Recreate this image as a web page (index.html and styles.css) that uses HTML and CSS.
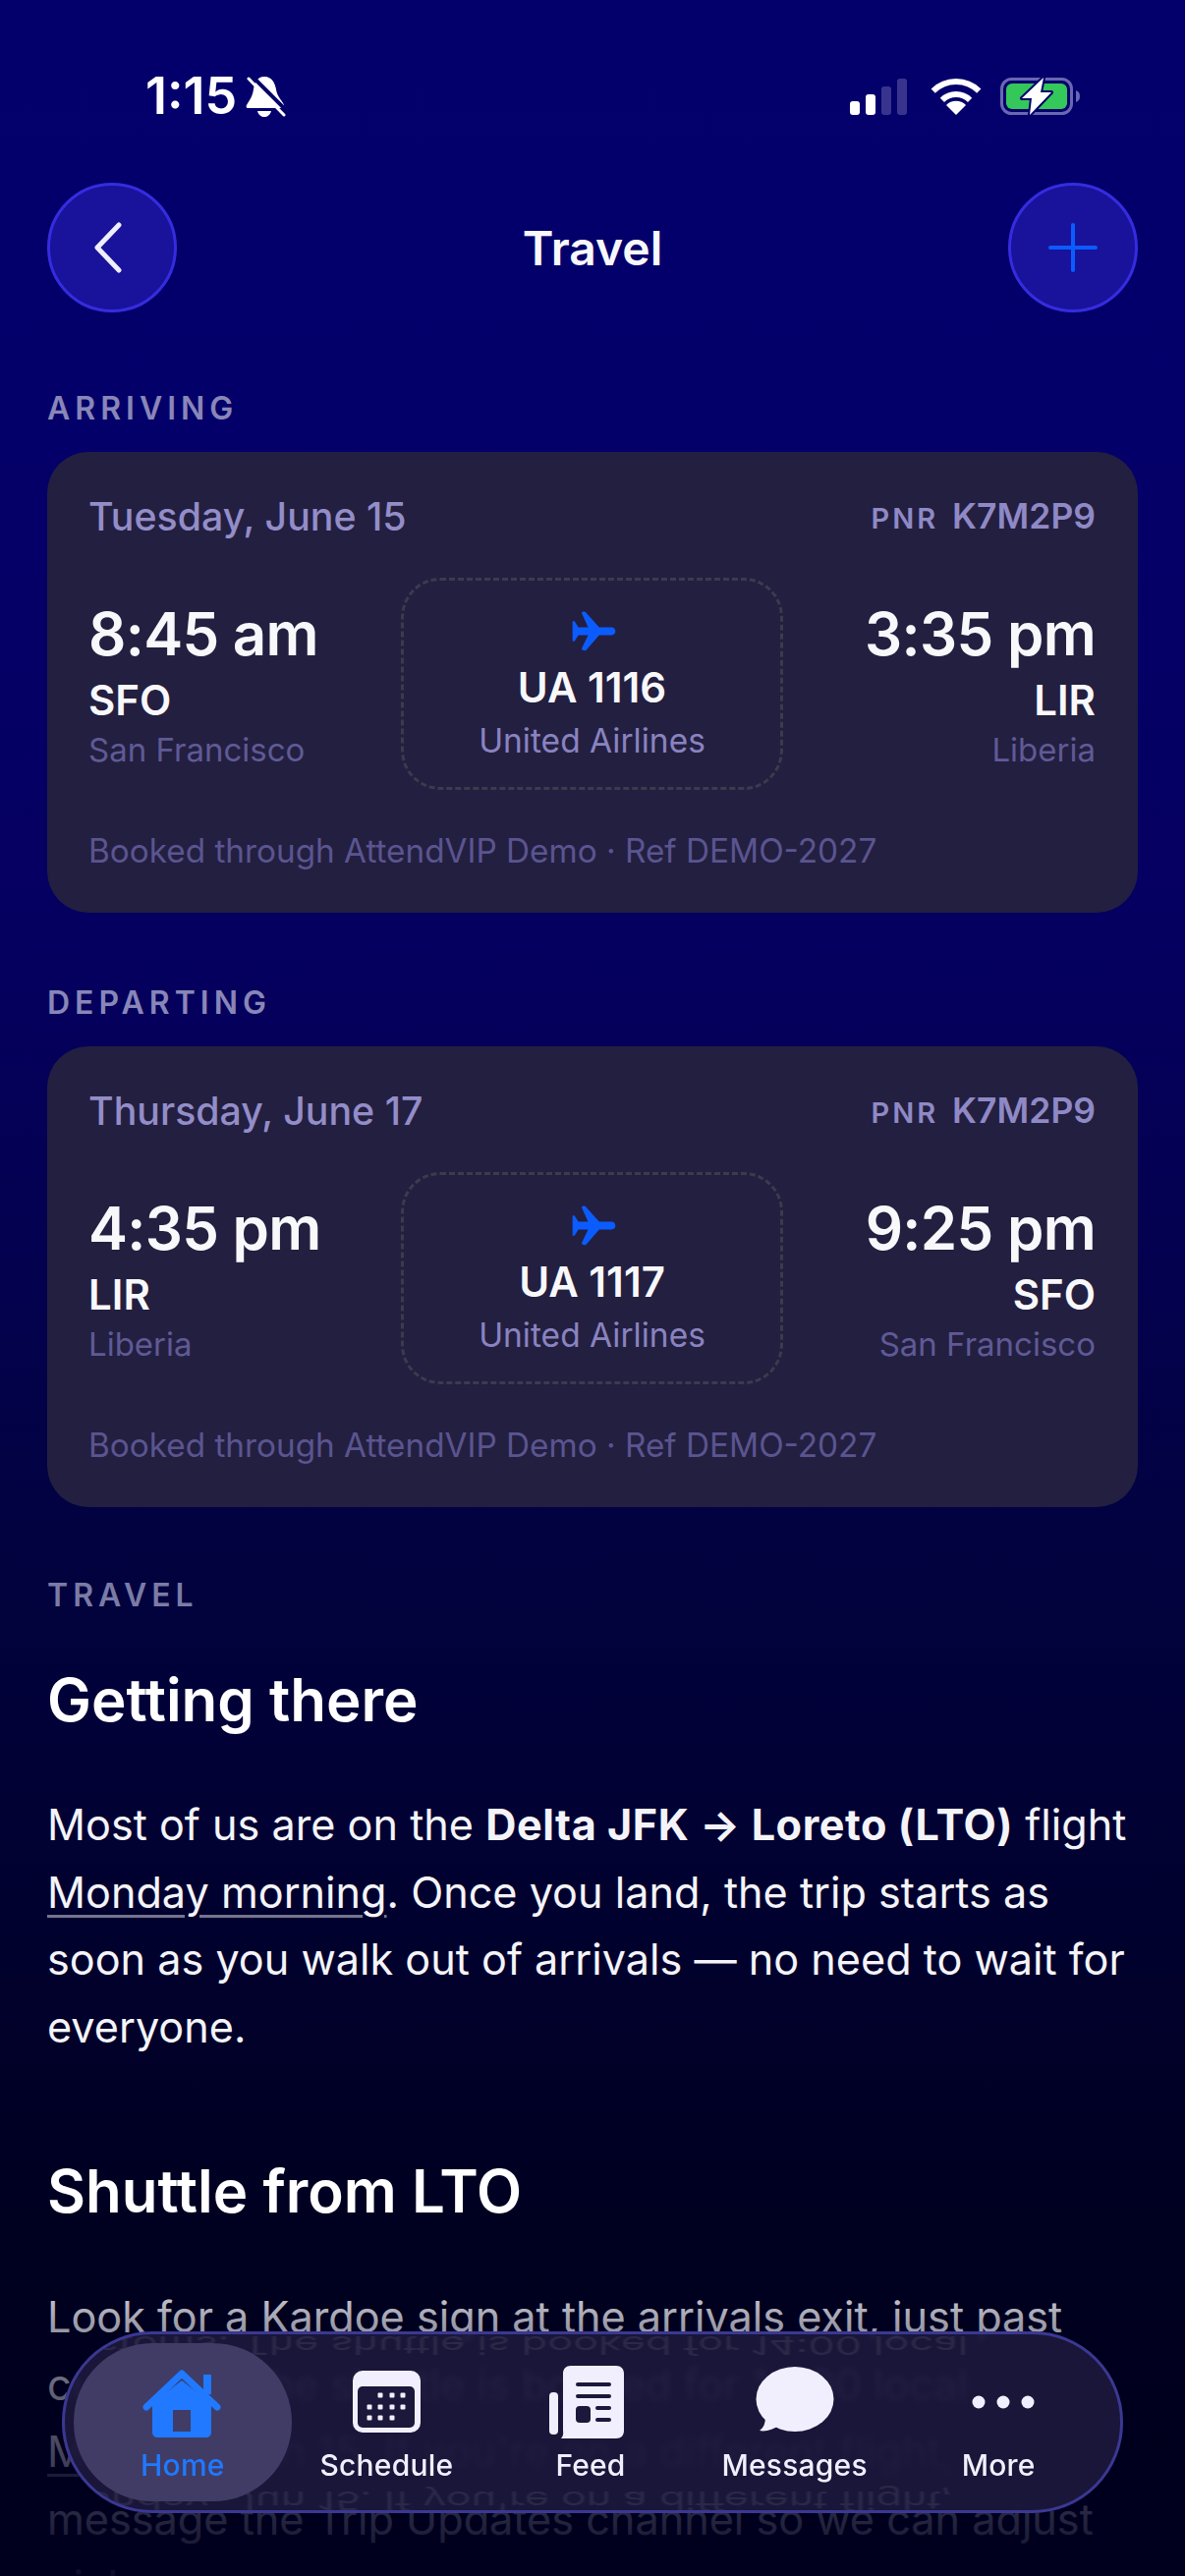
FILE: index.html
```html
<!DOCTYPE html>
<html lang="en">
<head>
    <meta charset="UTF-8">
    <meta name="viewport" content="width=device-width, initial-scale=1.0">
    <title>Travel</title>
    <link rel="stylesheet" href="styles.css">
</head>
<body>
<div class="page">
    <div class="status">
        <div class="status_left">
            <span class="clock">1:15</span>
            <svg width="42" height="43" viewBox="0 0 42 43">
                <path fill="#fff" d="M19 1C27 1 30 8 31 14C32 22 38 26 39 30C39 32 38 33 36 33H3C1 33 0 32 1 30C3 26 7 22 8 14C9 7 12 1 19 1Z"/>
                <path fill="#fff" d="M12 36H26C25 40 22 42 19 42C16 42 13 40 12 36Z"/>
                <path stroke="#03006a" stroke-width="4" d="M6 0L44 38"/>
                <path stroke="#fff" stroke-width="3" stroke-linecap="round" d="M3 3L39 40"/>
            </svg>
        </div>
        <div class="status_right">
            <svg class="signal" width="58" height="37" viewBox="0 0 58 37">
                <rect x="0" y="23" width="10" height="14" rx="3" fill="#fff"/>
                <rect x="16" y="16" width="10" height="21" rx="3" fill="#fff"/>
                <rect x="32" y="8" width="10" height="29" rx="3" fill="#38348e"/>
                <rect x="48" y="0" width="10" height="37" rx="3" fill="#38348e"/>
            </svg>
            <svg width="54" height="37" viewBox="0 0 54 37" fill="none" stroke="#fff" stroke-width="6">
                <path d="M3.7 12.7A33 33 0 0 1 50.3 12.7"/>
                <path d="M12.9 21.9A20 20 0 0 1 41.1 21.9"/>
                <path fill="#fff" stroke="none" d="M27 37L17 27A14 14 0 0 1 37 27Z"/>
            </svg>
            <svg width="82" height="40" viewBox="0 0 82 40">
                <rect x="1.5" y="2.5" width="71" height="35" rx="10" fill="none" stroke="#6a67b2" stroke-width="3"/>
                <rect x="6" y="7" width="62" height="26" rx="6" fill="#34c759"/>
                <path fill="#6a67b2" d="M77 14C80 15 81 17 81 20C81 23 80 25 77 26Z"/>
                <path fill="#fff" stroke="#03006a" stroke-width="4" stroke-linejoin="round" paint-order="stroke" d="M44 1L22 22H32L30 39L52 16H41Z"/>
            </svg>
        </div>
    </div>

    <div class="topbar">
        <div class="round_btn">
            <svg width="40" height="60" viewBox="0 0 40 60" fill="none" stroke="#eeeefc" stroke-width="5" stroke-linecap="round" stroke-linejoin="round"><path d="M27 7L5 30L27 53"/></svg>
        </div>
        <div class="topbar_title">Travel</div>
        <div class="round_btn">
            <svg width="50" height="50" viewBox="0 0 50 50" fill="none" stroke="#0b5cff" stroke-width="4" stroke-linecap="round"><path d="M25 2V48M2 25H48"/></svg>
        </div>
    </div>

    <div class="section_label first">ARRIVING</div>
    <div class="card">
        <div class="card_top">
            <span class="card_date">Tuesday, June 15</span>
            <span class="pnr"><span class="pnr_tag">PNR</span>K7M2P9</span>
        </div>
        <div class="route">
            <div class="stop">
                <div class="stop_time">8:45 am</div>
                <div class="stop_code">SFO</div>
                <div class="stop_city">San Francisco</div>
            </div>
            <div class="flight">
                <svg class="plane" width="45" height="41" viewBox="128 62 136 124"><path fill="#0b5cff" d="M250 112C258 112 262 118 262 124C262 130 258 136 250 136L212 136L172 182C168 185 160 184 158 178L178 136L148 136L136 155L130 155L130 93L136 93L148 112L178 112L158 68C160 63 168 62 172 67L212 112Z"/></svg>
                <div class="flight_no">UA 1116</div>
                <div class="flight_air">United Airlines</div>
            </div>
            <div class="stop stop_right">
                <div class="stop_time">3:35 pm</div>
                <div class="stop_code">LIR</div>
                <div class="stop_city">Liberia</div>
            </div>
        </div>
        <div class="card_foot">Booked through AttendVIP Demo · Ref DEMO-2027</div>
    </div>

    <div class="section_label">DEPARTING</div>
    <div class="card">
        <div class="card_top">
            <span class="card_date">Thursday, June 17</span>
            <span class="pnr"><span class="pnr_tag">PNR</span>K7M2P9</span>
        </div>
        <div class="route">
            <div class="stop">
                <div class="stop_time">4:35 pm</div>
                <div class="stop_code">LIR</div>
                <div class="stop_city">Liberia</div>
            </div>
            <div class="flight">
                <svg class="plane" width="45" height="41" viewBox="128 62 136 124"><path fill="#0b5cff" d="M250 112C258 112 262 118 262 124C262 130 258 136 250 136L212 136L172 182C168 185 160 184 158 178L178 136L148 136L136 155L130 155L130 93L136 93L148 112L178 112L158 68C160 63 168 62 172 67L212 112Z"/></svg>
                <div class="flight_no">UA 1117</div>
                <div class="flight_air">United Airlines</div>
            </div>
            <div class="stop stop_right">
                <div class="stop_time">9:25 pm</div>
                <div class="stop_code">SFO</div>
                <div class="stop_city">San Francisco</div>
            </div>
        </div>
        <div class="card_foot">Booked through AttendVIP Demo · Ref DEMO-2027</div>
    </div>

    <div class="section_label dim">TRAVEL</div>
    <h2 class="heading_one">Getting there</h2>
    <p class="copy copy_one">Most of us are on the <b>Delta JFK → Loreto (LTO)</b> flight <span class="link">Monday morning</span>. Once you land, the trip starts as soon as you walk out of arrivals — no need to wait for everyone.</p>
    <h2 class="heading_two">Shuttle from LTO</h2>
    <p class="copy copy_two">Look for a Kardoe sign at the arrivals exit, just past customs. The shuttle is booked for 14:00 local<br><span class="link">Monday, Jun 15</span>. If you're on a different flight,<br>message the Trip Updates channel so we can adjust pickup.</p>

    <div class="fade"></div>

    <div class="tabbar">
        <div class="ghost ghost_top">customs. The shuttle is booked for 14:00 local</div>
        <div class="ghost ghost_bottom">Monday, Jun 15. If you're on a different flight,</div>
        <div class="tabs">
            <div class="tab tab_active">
                <svg width="84" height="76" viewBox="0 0 84 76">
                    <path fill="#2079ff" d="M63 10H71V30H63Z"/>
                    <path fill="none" stroke="#2079ff" stroke-width="7" stroke-linecap="round" stroke-linejoin="round" d="M5 43L41 9L77 43"/>
                    <path fill="#2079ff" fill-rule="evenodd" d="M41 16L71 39V68C71 72 69 74 65 74H17C13 74 11 72 11 68V39ZM32 46V68H50V46Z"/>
                </svg>
                <span>Home</span>
            </div>
            <div class="tab">
                <svg width="84" height="76" viewBox="0 0 84 76">
                    <rect x="8" y="6" width="69" height="63" rx="10" fill="#f1effd"/>
                    <rect x="13" y="22" width="58" height="42" rx="5" fill="#1b183c"/>
                    <g fill="#f1effd">
                        <rect x="33.5" y="28.5" width="5" height="5" rx="1"/><rect x="45.5" y="28.5" width="5" height="5" rx="1"/><rect x="56.5" y="28.5" width="5" height="5" rx="1"/>
                        <rect x="22.5" y="40.5" width="5" height="5" rx="1"/><rect x="33.5" y="40.5" width="5" height="5" rx="1"/><rect x="45.5" y="40.5" width="5" height="5" rx="1"/><rect x="56.5" y="40.5" width="5" height="5" rx="1"/>
                        <rect x="22.5" y="51.5" width="5" height="5" rx="1"/><rect x="33.5" y="51.5" width="5" height="5" rx="1"/><rect x="45.5" y="51.5" width="5" height="5" rx="1"/>
                    </g>
                </svg>
                <span>Schedule</span>
            </div>
            <div class="tab">
                <svg width="84" height="76" viewBox="0 0 84 76">
                    <rect x="0" y="28" width="9" height="43" rx="4" fill="#f1effd"/>
                    <path fill="#f1effd" d="M22 1H68C73 1 76 4 76 9V67C76 72 73 75 68 75H12C15 72 14 69 14 66V9C14 4 17 1 22 1Z"/>
                    <g fill="#1b183c">
                        <rect x="27" y="18" width="36" height="4" rx="2"/>
                        <rect x="27" y="30" width="36" height="4" rx="2"/>
                        <rect x="27" y="42" width="15" height="17" rx="4"/>
                        <rect x="47" y="42" width="16" height="4" rx="2"/>
                        <rect x="47" y="54" width="16" height="4" rx="2"/>
                    </g>
                </svg>
                <span>Feed</span>
            </div>
            <div class="tab">
                <svg width="84" height="76" viewBox="0 0 84 76">
                    <ellipse cx="42" cy="35" rx="39.5" ry="33" fill="#f1effd"/>
                    <path fill="#f1effd" d="M12 52C12 60 10 64 6 67C12 68.500 20 66 27 61Z"/>
                </svg>
                <span>Messages</span>
            </div>
            <div class="tab">
                <svg width="84" height="76" viewBox="0 0 84 76" fill="#f1effd">
                    <circle cx="22" cy="38" r="6.500"/><circle cx="47" cy="38" r="6.500"/><circle cx="72" cy="38" r="6.500"/>
                </svg>
                <span>More</span>
            </div>
        </div>
    </div>
</div>
</body>
</html>
```

FILE: styles.css
```css
* {
    box-sizing: border-box;
}
body {
    margin: 0;
    background: #00001c;
    font-family: Inter, "Liberation Sans", sans-serif;
}
.page {
    position: relative;
    width: 1206px;
    height: 2622px;
    padding: 0 48px;
    overflow: hidden;
    color: #f8f8fb;
    background: linear-gradient(180deg, #03006c 0%, #04006a 15%, #050060 36%, #020240 60%, #000020 87%, #00001c 100%);
}

/* status bar */
.status {
    display: flex;
    justify-content: space-between;
    align-items: center;
    height: 42px;
    margin-top: 77px;
    padding: 0 58px 0 100px;
}
.page > .status {
    padding-top: 0;
}
.status_left {
    display: flex;
    align-items: center;
    gap: 9px;
}
.clock {
    font-size: 52px;
    font-weight: 600;
    line-height: 42px;
    color: #fff;
}
.status_right {
    display: flex;
    align-items: center;
    gap: 18px;
}
.signal {
    margin-right: 5px;
}

/* header */
.topbar {
    display: flex;
    justify-content: space-between;
    align-items: center;
    margin-top: 67px;
}
.round_btn {
    display: flex;
    justify-content: center;
    align-items: center;
    width: 132px;
    height: 132px;
    border-radius: 50%;
    border: 3px solid #352ce0;
    background: #19129a;
}
.topbar_title {
    font-size: 48px;
    font-weight: 600;
}

/* labels */
.section_label {
    margin-top: 74px;
    margin-bottom: 26px;
    font-size: 32px;
    line-height: 36px;
    font-weight: 600;
    letter-spacing: 5px;
    color: #8986b8;
}
.section_label.first {
    margin-top: 80px;
}
.section_label.dim {
    margin-top: 72px;
    margin-bottom: 0;
    color: #7b7ba6;
}

/* flight cards */
.card {
    padding: 45px 43px 43px 42px;
    border-radius: 42px;
    background: #231f40;
}
.card_top {
    display: flex;
    justify-content: space-between;
    align-items: center;
    height: 40px;
}
.card_date {
    font-size: 39.3px;
    font-weight: 500;
    color: #938dc8;
}
.pnr {
    font-size: 35.5px;
    font-weight: 600;
    color: #8f89c6;
}
.pnr_tag {
    margin-right: 14px;
    font-size: 29px;
    font-weight: 600;
    letter-spacing: 3px;
}
.route {
    display: grid;
    grid-template-columns: 1fr 389px 1fr;
    align-items: center;
    margin-top: 43px;
}
.stop_right {
    text-align: right;
}
.stop_time {
    font-size: 60px;
    line-height: 70px;
    font-weight: 600;
    letter-spacing: -0.7px;
}
.stop_code {
    margin-top: 9px;
    font-size: 42px;
    line-height: 48px;
    font-weight: 600;
}
.stop_city {
    margin-top: 6px;
    font-size: 33px;
    line-height: 40px;
    color: #5f5a96;
}
.flight {
    display: flex;
    flex-direction: column;
    align-items: center;
    height: 216px;
    padding-top: 31px;
    border: 3px dashed #3d3a4e;
    border-radius: 40px;
}
.plane {
    display: block;
    margin-left: 3px;
}
.flight_no {
    margin-top: 13px;
    font-size: 42px;
    line-height: 48px;
    font-weight: 600;
}
.flight_air {
    margin-top: 10px;
    font-size: 33.5px;
    line-height: 40px;
    color: #8a83c0;
}
.card_foot {
    margin-top: 42px;
    font-size: 33.3px;
    line-height: 40px;
    color: #5a5590;
}

/* article */
.heading_one,
.heading_two {
    margin: 52px 0 0;
    font-size: 60px;
    line-height: 72px;
    font-weight: 600;
    color: #fff;
}
.heading_two {
    margin-top: 97px;
}
.copy {
    margin: 57px 0 0;
    font-size: 43.2px;
    line-height: 68.5px;
    color: #f4f4f8;
}
.copy_two {
    margin-top: 58px;
}
.copy b {
    font-weight: 700;
    letter-spacing: 0.55px;
}
.link {
    text-decoration: underline;
    text-decoration-color: #74748c;
    text-decoration-thickness: 3px;
    text-underline-offset: 7px;
}

/* bottom fade and tab bar */
.fade {
    position: absolute;
    left: 0;
    right: 0;
    bottom: 0;
    height: 322px;
    background: linear-gradient(180deg, rgba(0, 0, 30, 0) 0%, rgba(0, 0, 30, 0.35) 20%, rgba(0, 0, 30, 0.6) 42%, rgba(0, 0, 30, 0.85) 82%, rgba(0, 0, 30, 0.95) 100%);
}
.tabbar {
    position: absolute;
    left: 63px;
    right: 63px;
    top: 2373px;
    height: 185px;
    overflow: hidden;
    border: 3px solid #3b3894;
    border-radius: 92px;
    background: rgba(27, 24, 60, 0.91);
    backdrop-filter: blur(3px);
}
.ghost {
    position: absolute;
    left: -18px;
    width: 1110px;
    font-size: 43.2px;
    line-height: 50px;
    white-space: nowrap;
    color: #fff;
    opacity: 0.08;
    filter: blur(1px);
    transform: scaleY(-0.6);
}
.ghost_top {
    top: -13px;
}
.ghost_bottom {
    top: 145px;
}
.tabs {
    position: relative;
    display: grid;
    grid-template-columns: repeat(5, 1fr);
    height: 100%;
    padding: 9px 20px 9px 16px;
}
.tab {
    display: flex;
    flex-direction: column;
    align-items: center;
    padding-top: 22px;
    border-radius: 80px;
    font-size: 30px;
    line-height: 36px;
    font-weight: 500;
    letter-spacing: 0.2px;
    color: #f1effd;
}
.tab svg {
    display: block;
    flex: none;
    margin-bottom: 8px;
}
.tab_active {
    margin: 0 -7px;
    background: #403c66;
    color: #2079ff;
}
```
